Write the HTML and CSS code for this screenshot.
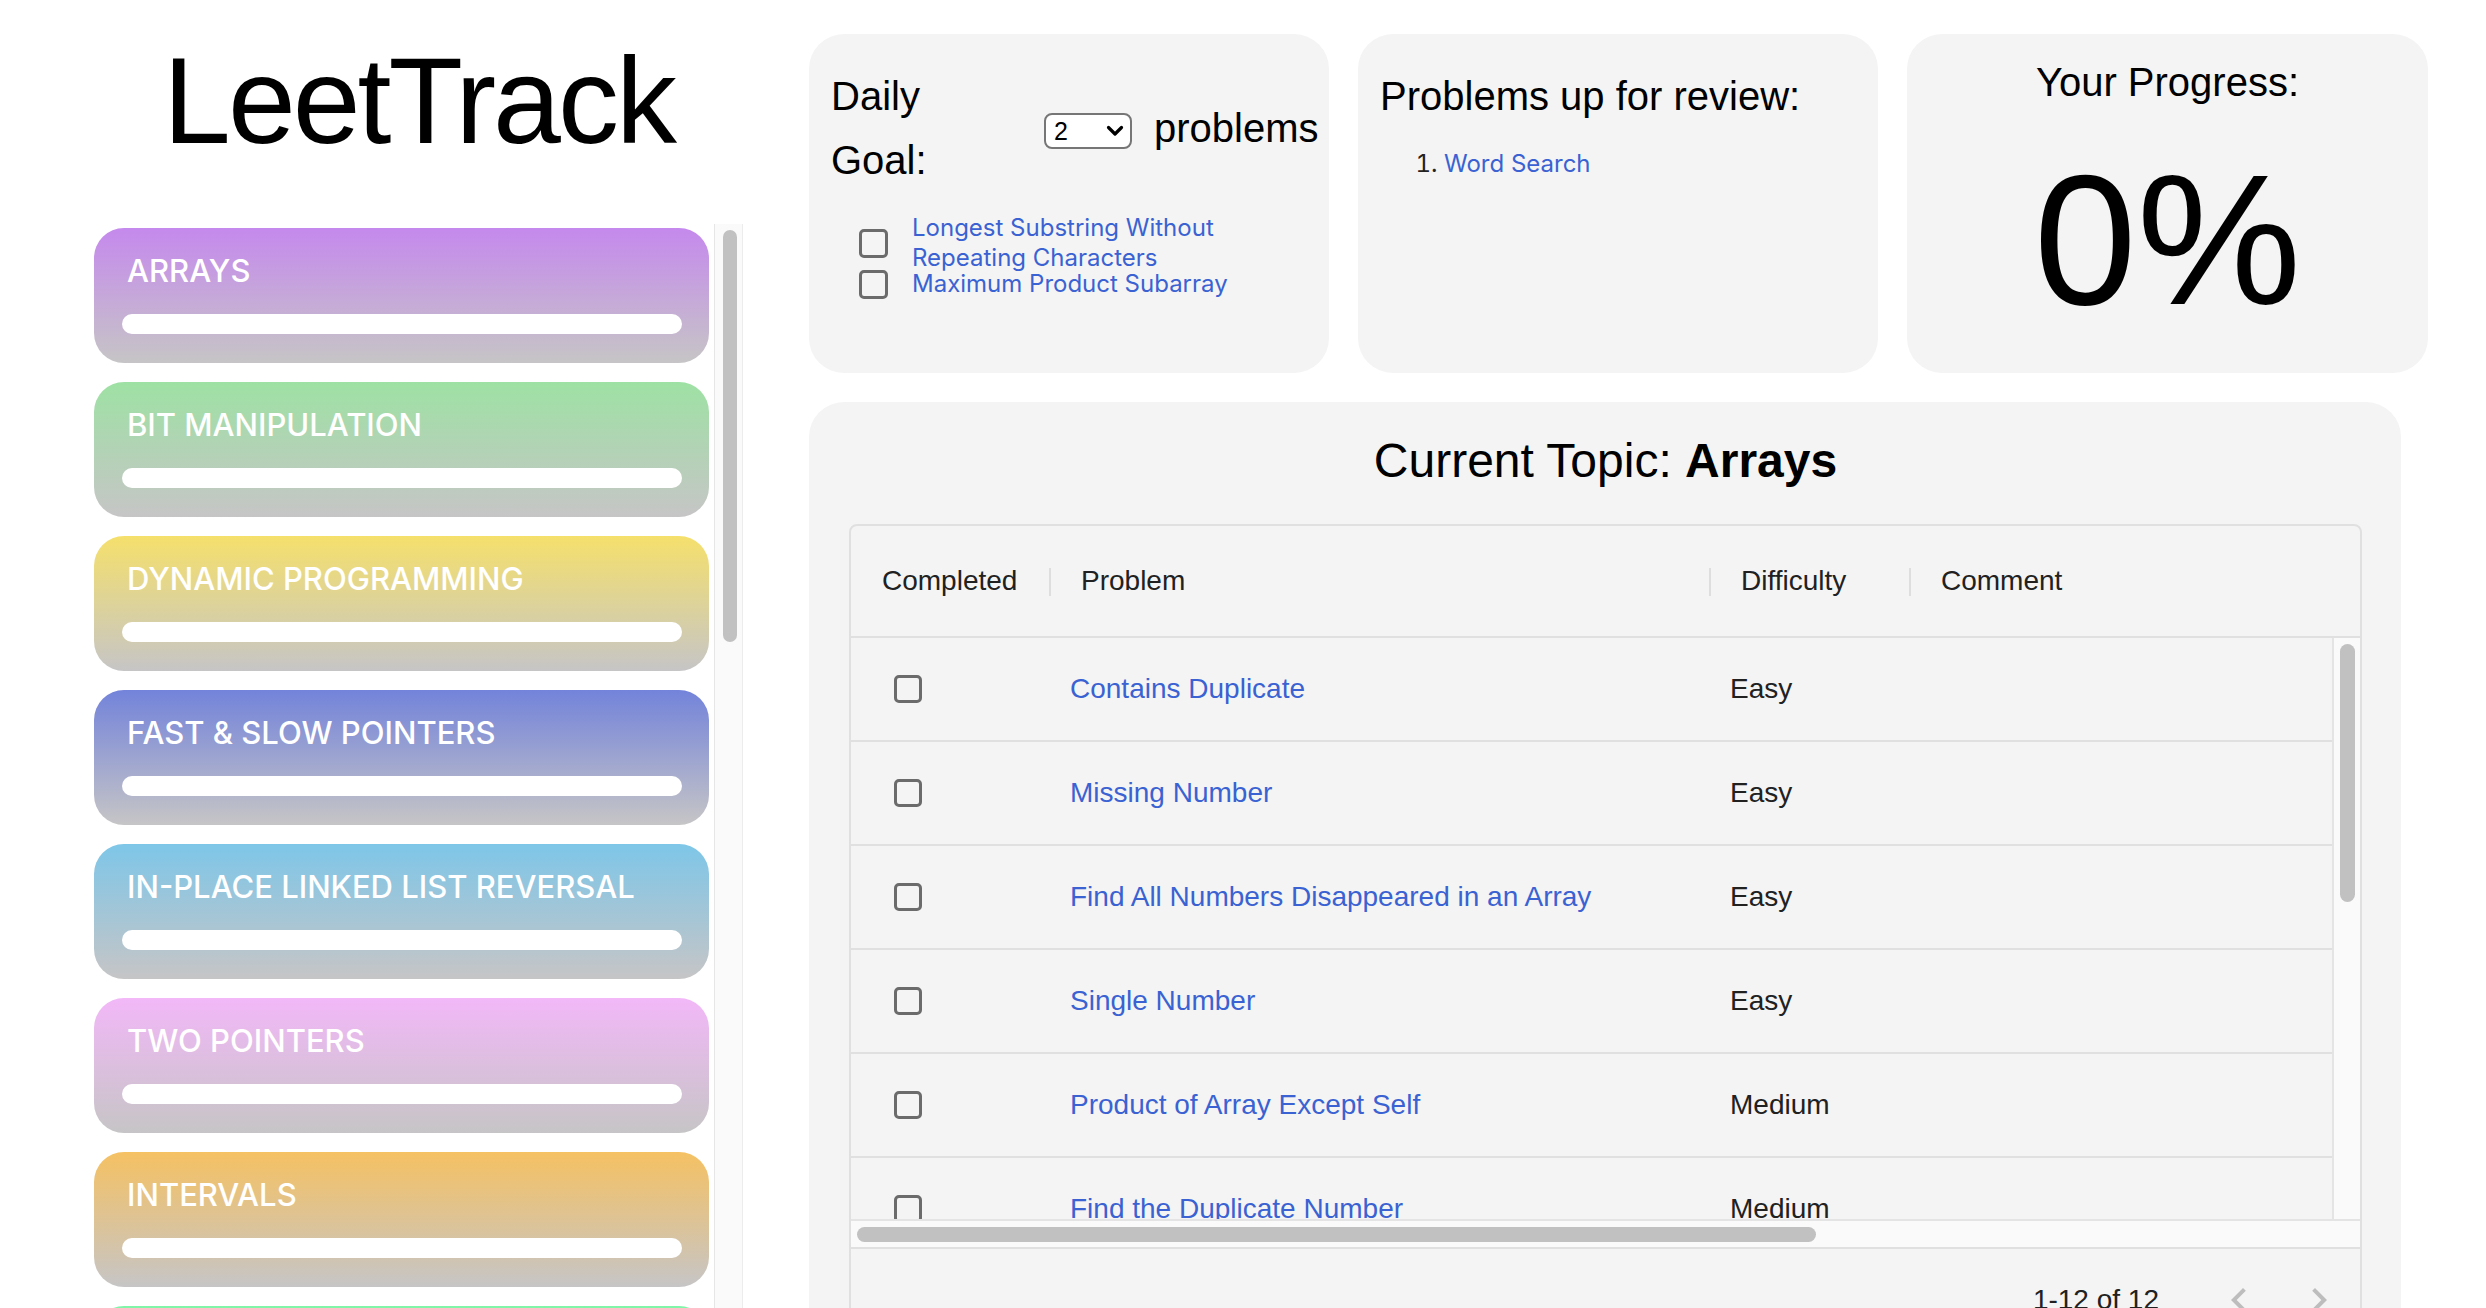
FILE: index.html
```html
<!DOCTYPE html>
<html lang="en">
<head>
<meta charset="utf-8">
<title>LeetTrack</title>
<link rel="stylesheet" href="styles.css">
</head>
<body>
<div class="app">
  <aside class="left">
    <h1 class="logo">LeetTrack</h1>
    <div class="topics-wrap">
      <nav class="topics">
        <div class="topic t-arrays"><div class="topic-name">ARRAYS</div><div class="topic-bar"></div></div>
        <div class="topic t-bit"><div class="topic-name">BIT MANIPULATION</div><div class="topic-bar"></div></div>
        <div class="topic t-dp"><div class="topic-name">DYNAMIC PROGRAMMING</div><div class="topic-bar"></div></div>
        <div class="topic t-fast"><div class="topic-name">FAST &amp; SLOW POINTERS</div><div class="topic-bar"></div></div>
        <div class="topic t-ll"><div class="topic-name">IN-PLACE LINKED LIST REVERSAL</div><div class="topic-bar"></div></div>
        <div class="topic t-two"><div class="topic-name">TWO POINTERS</div><div class="topic-bar"></div></div>
        <div class="topic t-int"><div class="topic-name">INTERVALS</div><div class="topic-bar"></div></div>
        <div class="topic t-sw"><div class="topic-name">SLIDING WINDOW</div><div class="topic-bar"></div></div>
        <div class="topic t-bs"><div class="topic-name">MODIFIED BINARY SEARCH</div><div class="topic-bar"></div></div>
        <div class="topic t-bfs"><div class="topic-name">TREE BREADTH FIRST SEARCH</div><div class="topic-bar"></div></div>
        <div class="topic t-dfs"><div class="topic-name">TREE DEPTH FIRST SEARCH</div><div class="topic-bar"></div></div>
        <div class="topic t-heap"><div class="topic-name">TWO HEAPS</div><div class="topic-bar"></div></div>
        <div class="topic t-sub"><div class="topic-name">SUBSETS</div><div class="topic-bar"></div></div>
        <div class="topic t-topk"><div class="topic-name">TOP K ELEMENTS</div><div class="topic-bar"></div></div>
        <div class="topic t-kway"><div class="topic-name">K-WAY MERGE</div><div class="topic-bar"></div></div>
        <div class="topic t-graph"><div class="topic-name">GRAPHS</div><div class="topic-bar"></div></div>
        <div class="topic t-topo"><div class="topic-name">TOPOLOGICAL SORT</div><div class="topic-bar"></div></div>
        <div class="topic t-back"><div class="topic-name">BACKTRACKING</div><div class="topic-bar"></div></div>
      </nav>
      <div class="side-track"><div class="side-thumb"></div></div>
    </div>
  </aside>

  <main class="right">
    <div class="top-row">
      <section class="card goal-card">
        <div class="goal-row">
          <h2 class="h6 goal-label">Daily Goal:</h2>
          <span class="select-wrap">
            <select class="goal-select">
              <option>1</option>
              <option selected>2</option>
              <option>3</option>
              <option>4</option>
              <option>5</option>
            </select>
            <svg class="select-arrow" width="18" height="12" viewBox="0 0 18 12"><path d="M2.5 2.5 L9 9 L15.5 2.5" fill="none" stroke="#000" stroke-width="3.2" stroke-linecap="round" stroke-linejoin="round"/></svg>
          </span>
          <h2 class="h6 goal-unit">problems</h2>
        </div>
        <ul class="daily-list">
          <li class="daily-item"><input type="checkbox" class="cb"><a href="#" class="link">Longest Substring Without Repeating Characters</a></li>
          <li class="daily-item second"><input type="checkbox" class="cb"><a href="#" class="link">Maximum Product Subarray</a></li>
        </ul>
      </section>

      <section class="card review-card">
        <h2 class="h6">Problems up for review:</h2>
        <ol class="review-list">
          <li><a href="#" class="link">Word Search</a></li>
        </ol>
      </section>

      <section class="card progress-card">
        <h2 class="h6 center">Your Progress:</h2>
        <div class="percent">0%</div>
      </section>
    </div>

    <section class="card topic-card">
      <h2 class="topic-title">Current Topic: <b>Arrays</b></h2>
      <div class="grid">
        <div class="grid-head">
          <div class="head-row">
            <div class="hcell col-done sep">Completed</div>
            <div class="hcell col-prob sep">Problem</div>
            <div class="hcell col-diff sep">Difficulty</div>
            <div class="hcell col-comm">Comment</div>
          </div>
        </div>
        <div class="grid-body">
          <div class="viewport">
            <div class="row"><div class="cell col-done"><input type="checkbox" class="cb"></div><div class="cell col-prob"><a href="#" class="link">Contains Duplicate</a></div><div class="cell col-diff">Easy</div><div class="cell col-comm"></div></div>
            <div class="row"><div class="cell col-done"><input type="checkbox" class="cb"></div><div class="cell col-prob"><a href="#" class="link">Missing Number</a></div><div class="cell col-diff">Easy</div><div class="cell col-comm"></div></div>
            <div class="row"><div class="cell col-done"><input type="checkbox" class="cb"></div><div class="cell col-prob"><a href="#" class="link">Find All Numbers Disappeared in an Array</a></div><div class="cell col-diff">Easy</div><div class="cell col-comm"></div></div>
            <div class="row"><div class="cell col-done"><input type="checkbox" class="cb"></div><div class="cell col-prob"><a href="#" class="link">Single Number</a></div><div class="cell col-diff">Easy</div><div class="cell col-comm"></div></div>
            <div class="row"><div class="cell col-done"><input type="checkbox" class="cb"></div><div class="cell col-prob"><a href="#" class="link">Product of Array Except Self</a></div><div class="cell col-diff">Medium</div><div class="cell col-comm"></div></div>
            <div class="row"><div class="cell col-done"><input type="checkbox" class="cb"></div><div class="cell col-prob"><a href="#" class="link">Find the Duplicate Number</a></div><div class="cell col-diff">Medium</div><div class="cell col-comm"></div></div>
            <div class="row"><div class="cell col-done"><input type="checkbox" class="cb"></div><div class="cell col-prob"><a href="#" class="link">Find All Duplicates in an Array</a></div><div class="cell col-diff">Medium</div><div class="cell col-comm"></div></div>
            <div class="row"><div class="cell col-done"><input type="checkbox" class="cb"></div><div class="cell col-prob"><a href="#" class="link">Set Matrix Zeroes</a></div><div class="cell col-diff">Medium</div><div class="cell col-comm"></div></div>
            <div class="row"><div class="cell col-done"><input type="checkbox" class="cb"></div><div class="cell col-prob"><a href="#" class="link">Spiral Matrix</a></div><div class="cell col-diff">Medium</div><div class="cell col-comm"></div></div>
            <div class="row"><div class="cell col-done"><input type="checkbox" class="cb"></div><div class="cell col-prob"><a href="#" class="link">Rotate Image</a></div><div class="cell col-diff">Medium</div><div class="cell col-comm"></div></div>
            <div class="row"><div class="cell col-done"><input type="checkbox" class="cb"></div><div class="cell col-prob"><a href="#" class="link">Word Search</a></div><div class="cell col-diff">Medium</div><div class="cell col-comm"></div></div>
            <div class="row"><div class="cell col-done"><input type="checkbox" class="cb"></div><div class="cell col-prob"><a href="#" class="link">First Missing Positive</a></div><div class="cell col-diff">Hard</div><div class="cell col-comm"></div></div>
          </div>
          <div class="vtrack"><div class="vthumb"></div></div>
          <div class="htrack"><div class="hthumb"></div></div>
          <div class="corner"></div>
        </div>
        <div class="grid-foot">
          <span class="page-info">1-12 of 12</span>
          <button class="page-btn first" disabled aria-label="previous page"><svg width="48" height="48" viewBox="0 0 24 24"><path d="M15.41 16.59 10.83 12l4.58-4.59L14 6l-6 6 6 6 1.41-1.41z" fill="#bdbdbd"/></svg></button>
          <button class="page-btn" disabled aria-label="next page"><svg width="48" height="48" viewBox="0 0 24 24"><path d="M8.59 16.59 13.17 12 8.59 7.41 10 6l6 6-6 6-1.41-1.41z" fill="#bdbdbd"/></svg></button>
        </div>
      </div>
    </section>
  </main>
</div>
</body>
</html>
```

FILE: styles.css
```css
* { box-sizing: border-box; }

html, body {
  margin: 0;
  padding: 0;
  height: 100%;
  overflow: hidden;
  background: #ffffff;
}

body {
  font-family: "Liberation Sans", Arial, Helvetica, sans-serif;
  color: #000;
}

.app {
  display: flex;
  height: 100vh;
}

/* ---------- left column ---------- */
.left {
  flex: 0 0 649px;
  width: 649px;
  margin-left: 94px;
  display: flex;
  flex-direction: column;
  min-height: 0;
}

.logo {
  margin: 40px 0 0;
  height: 122px;
  font-family: "Liberation Sans", Arial, sans-serif;
  font-weight: 400;
  font-size: 122px;
  line-height: 122px;
  letter-spacing: -3px;
  text-align: center;
  color: #000;
}

.topics-wrap {
  margin-top: 62px;
  flex: 1 1 auto;
  min-height: 0;
  display: flex;
}

.topics {
  flex: 1 1 auto;
  min-width: 0;
  overflow: hidden;
  padding-top: 4px;
}

.side-track {
  flex: 0 0 29px;
  background: #fafafa;
  border-left: 1px solid #e6e6e6;
  border-right: 1px solid #ececec;
  padding: 6px 5px 0 8px;
}

.side-thumb {
  height: 412px;
  border-radius: 7px;
  background: #c1c1c1;
}

.topic {
  height: 135px;
  margin: 0 5px 19px 0;
  border-radius: 30px;
  padding: 25px 27px 0 28px;
  --c: #c589ed;
  background: linear-gradient(180deg, var(--c) 0%, #c6c5c6 100%);
}

.topic-name {
  margin-left: 5px;
  font-family: Inter, "Noto Sans", sans-serif;
  font-weight: 500;
  font-size: 31px;
  line-height: 36px;
  color: #ffffff;
  white-space: nowrap;
}

.topic-bar {
  margin-top: 25px;
  height: 20px;
  border-radius: 10px;
  background: #ffffff;
}

.t-arrays { --c: #c589ed; }
.t-bit    { --c: #9ee1a4; }
.t-dp     { --c: #f5e06c; }
.t-fast   { --c: #7383da; }
.t-ll     { --c: #7ec6e8; }
.t-two    { --c: #f2b8f8; }
.t-int    { --c: #f5c163; }
.t-sw     { --c: #80f5a8; }
.t-bs     { --c: #f59a8c; }
.t-bfs    { --c: #8cd2f5; }
.t-dfs    { --c: #b59af0; }
.t-heap   { --c: #f5a6c8; }
.t-sub    { --c: #a0e6d2; }
.t-topk   { --c: #f2d37a; }
.t-kway   { --c: #8fa8f0; }
.t-graph  { --c: #9de08c; }
.t-topo   { --c: #e9a0f0; }
.t-back   { --c: #f0b070; }

/* ---------- right column ---------- */
.right {
  flex: 0 0 1619px;
  width: 1619px;
  margin-left: 66px;
  padding-top: 34px;
}

.top-row {
  display: flex;
  gap: 29px;
  height: 339px;
}

.card {
  background: #f4f4f4;
  border-radius: 35px;
}

.h6 {
  margin: 0;
  font-family: "Liberation Sans", Arial, sans-serif;
  font-weight: 400;
  font-size: 40px;
  line-height: 64px;
  color: #000;
}

.center { text-align: center; }

.link {
  color: #3a62d2;
  text-decoration: none;
}

/* daily goal */
.goal-card {
  flex: 0 0 520px;
  padding: 30px 10px 0 22px;
}

.goal-row {
  display: flex;
  align-items: center;
}

.goal-label {
  flex: 0 0 192px;
  width: 192px;
}

.select-wrap {
  position: relative;
  flex: 0 0 88px;
  margin: 6px 0 0 21px;
  height: 36px;
}

.goal-select {
  -webkit-appearance: none;
  appearance: none;
  width: 88px;
  height: 36px;
  border: 2px solid #767676;
  border-radius: 8px;
  background: #ffffff;
  padding: 0 0 0 8px;
  font-family: "Liberation Sans", Arial, sans-serif;
  font-size: 25px;
  color: #000;
  outline: none;
}

.select-arrow {
  position: absolute;
  right: 8px;
  top: 12px;
  pointer-events: none;
}

.goal-unit {
  flex: 0 0 auto;
  margin-left: 22px;
  white-space: nowrap;
}

.daily-list {
  list-style: none;
  margin: 21px 0 0;
  padding: 0 0 0 28px;
}

.daily-item {
  display: flex;
  align-items: center;
  font-family: Inter, "Noto Sans", sans-serif;
  font-size: 24px;
  line-height: 30px;
}

.daily-item.second { margin-top: -4px; }

.daily-item .link { width: 330px; }

.cb {
  -webkit-appearance: none;
  appearance: none;
  flex: 0 0 29px;
  width: 29px;
  height: 29px;
  margin: 0 24px 0 0;
  border: 3px solid #6b6b6b;
  border-radius: 5px;
  background: transparent;
}

/* review */
.review-card {
  flex: 0 0 520px;
  padding: 30px 22px 0 22px;
}

.review-list {
  margin: 21px 0 0;
  padding-left: 64px;
  font-family: Inter, "Noto Sans", sans-serif;
  font-size: 24px;
  line-height: 30px;
  color: #222;
}

/* progress */
.progress-card {
  flex: 0 0 521px;
  padding-top: 16px;
}

.percent {
  margin-top: 34px;
  font-family: "Liberation Sans", Arial, sans-serif;
  font-size: 185px;
  line-height: 1;
  text-align: center;
  color: #000;
}

/* ---------- topic card ---------- */
.topic-card {
  width: 1592px;
  margin-top: 29px;
  padding: 27px 39px 40px 40px;
}

.topic-title {
  margin: 0;
  font-family: "Liberation Sans", Arial, sans-serif;
  font-weight: 400;
  font-size: 48px;
  line-height: 64px;
  text-align: center;
  color: #000;
}

.topic-title b { font-weight: 700; }

.grid {
  margin-top: 31px;
  border: 2px solid #e0e0e0;
  border-radius: 8px;
  font-family: "Liberation Sans", Arial, sans-serif;
  font-size: 28px;
  color: #212121;
}

.grid-head {
  overflow: hidden;
  border-bottom: 2px solid #e0e0e0;
}

.head-row {
  display: flex;
  width: 2271px;
  height: 110px;
}

.hcell {
  position: relative;
  padding-left: 31px;
  line-height: 110px;
  white-space: nowrap;
}

.hcell.sep::after {
  content: "";
  position: absolute;
  right: -1px;
  top: 42px;
  width: 2px;
  height: 28px;
  background: #dedede;
}

.col-done { flex: 0 0 199px; }
.col-prob { flex: 0 0 660px; }
.col-diff { flex: 0 0 200px; }
.col-comm { flex: 0 0 1212px; }

.grid-body {
  display: grid;
  grid-template-columns: minmax(0, 1fr) 28px;
  grid-template-rows: 581px 28px;
}

.viewport {
  overflow: hidden;
  min-width: 0;
}

.vtrack {
  background: #fafafa;
  border-left: 2px solid #e4e4e4;
  padding: 6px 5px 0 6px;
}

.vthumb {
  height: 258px;
  border-radius: 8px;
  background: #c1c1c1;
}

.htrack {
  background: #fafafa;
  border-top: 2px solid #e4e4e4;
  padding: 6px 0 0 6px;
}

.hthumb {
  width: 959px;
  height: 15px;
  border-radius: 8px;
  background: #c1c1c1;
}

.corner {
  background: #fafafa;
  border-top: 2px solid #e4e4e4;
}

.row {
  display: flex;
  width: 2271px;
  height: 104px;
  border-bottom: 2px solid #e0e0e0;
}

.cell {
  display: flex;
  align-items: center;
  padding-left: 20px;
  white-space: nowrap;
}

.cell.col-done { padding-left: 43px; }
.cell .cb { margin: 0; width: 28px; height: 28px; flex-basis: 28px; }

.grid-foot {
  display: flex;
  align-items: center;
  justify-content: flex-end;
  height: 104px;
  border-top: 2px solid #e0e0e0;
  padding-right: 1px;
}

.page-info {
  color: #212121;
}

.page-btn {
  width: 80px;
  height: 80px;
  padding: 16px;
  border: 0;
  background: transparent;
  display: flex;
  align-items: center;
  justify-content: center;
}

.page-btn.first { margin-left: 40px; }
```
